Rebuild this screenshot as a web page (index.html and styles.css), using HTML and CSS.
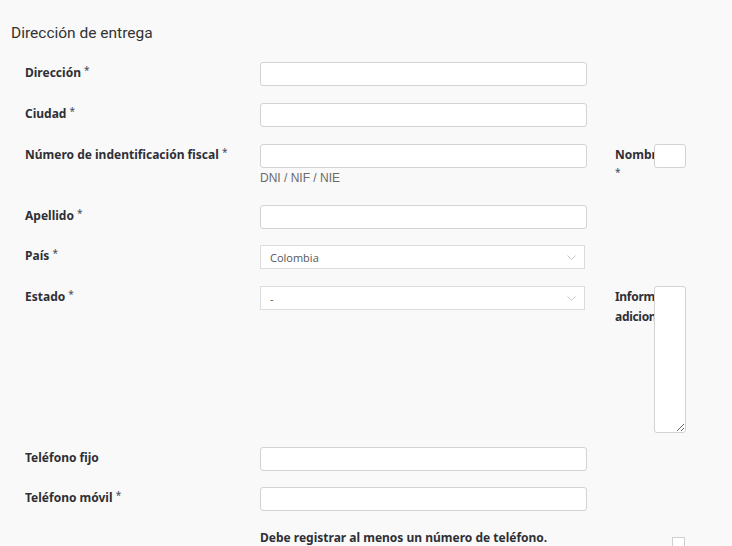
FILE: index.html
```html
<!DOCTYPE html>
<html lang="es">
<head>
<meta charset="utf-8">
<link rel="stylesheet" href="styles.css">
</head>
<body>
<div class="page">
  <h2 class="title">Dirección de entrega</h2>
  <form class="form">
    <label class="lbl c1">Dirección <span class="req">*</span></label>
    <div class="c2"><input class="inp" type="text"></div>

    <label class="lbl c1">Ciudad <span class="req">*</span></label>
    <div class="c2"><input class="inp" type="text"></div>

    <label class="lbl c1">Número de indentificación fiscal <span class="req">*</span></label>
    <div class="c2">
      <input class="inp" type="text">
      <div class="help">DNI / NIF / NIE</div>
    </div>
    <label class="lbl c4">Nombre <span class="req">*</span></label>
    <div class="c5"><input class="inp small" type="text"></div>

    <label class="lbl c1">Apellido <span class="req">*</span></label>
    <div class="c2"><input class="inp" type="text"></div>

    <label class="lbl c1">País <span class="req">*</span></label>
    <div class="c2">
      <div class="sel"><span>Colombia</span><svg class="chev" width="9" height="5" viewBox="0 0 9 5"><path d="M0.5 0.5 L4.5 4.5 L8.5 0.5" fill="none" stroke="#c8c8c8" stroke-width="1"/></svg></div>
    </div>

    <label class="lbl c1">Estado <span class="req">*</span></label>
    <div class="c2">
      <div class="sel"><span>-</span><svg class="chev" width="9" height="5" viewBox="0 0 9 5"><path d="M0.5 0.5 L4.5 4.5 L8.5 0.5" fill="none" stroke="#c8c8c8" stroke-width="1"/></svg></div>
    </div>
    <label class="lbl c4 tight">Información adicional</label>
    <div class="c5"><textarea class="ta"></textarea></div>

    <label class="lbl c1">Teléfono fijo</label>
    <div class="c2"><input class="inp" type="text"></div>

    <label class="lbl c1">Teléfono móvil <span class="req">*</span></label>
    <div class="c2"><input class="inp" type="text"></div>

    <div class="c2 msg">Debe registrar al menos un número de teléfono.</div>
    <div class="c5 chkwrap"><span class="chk"></span></div>
  </form>
</div>
</body>
</html>
```

FILE: styles.css
```css
html, body {
  margin: 0;
  padding: 0;
  background: #f9f9f9;
}
.page {
  width: 732px;
  height: 546px;
  overflow: hidden;
}
.title {
  margin: 0;
  padding: 23px 0 0 11px;
  font-family: Roboto, "Liberation Sans", sans-serif;
  font-weight: 400;
  font-size: 15.5px;
  line-height: 20px;
  color: #333;
}
.form {
  display: grid;
  grid-template-columns: 235px 327px 28px 39px 32px;
  grid-template-rows: 24px 24px 44px 23px 24px 144px 23px 24px auto;
  row-gap: 17px;
  padding: 19px 0 0 25px;
  margin: 0;
}
.c1 { grid-column: 1; }
.c2 { grid-column: 2; }
.c4 { grid-column: 4; }
.c5 { grid-column: 5; }
.lbl {
  font-family: "Noto Sans", Lato, sans-serif;
  font-weight: 700;
  font-size: 12px;
  line-height: 20px;
  padding-top: 1px;
  color: #2f2f36;
  min-width: 0;
}
.tight {
  letter-spacing: -0.3px;
}
.req {
  font-weight: 400;
  font-size: 10px;
  vertical-align: top;
  line-height: 14px;
  color: #3d4b5c;
}
.inp {
  display: block;
  box-sizing: border-box;
  width: 100%;
  height: 24px;
  margin: 0;
  border: 1px solid #d3d3d3;
  border-radius: 3px;
  background: #fff;
  padding: 0 6px;
}
.help {
  font-family: "Liberation Sans", Arial, sans-serif;
  font-size: 12px;
  line-height: 20px;
  color: #6b6b6b;
}
.sel {
  box-sizing: border-box;
  width: 325px;
  height: 24px;
  border: 1px solid #dcdcdc;
  background: #fff;
  display: flex;
  align-items: center;
  justify-content: space-between;
  padding: 0 8px 0 9px;
  font-family: "Open Sans", "Noto Sans", sans-serif;
  font-size: 11px;
  color: #555;
}
.chev { display: block; }
.ta {
  display: block;
  box-sizing: border-box;
  width: 32px;
  height: 147px;
  margin: 0;
  border: 1px solid #d3d3d3;
  border-radius: 3px;
  background: #fff;
  padding: 0;
}
.msg {
  font-family: "Noto Sans", Lato, sans-serif;
  font-weight: 700;
  font-size: 12px;
  line-height: 20px;
  color: #2f2f36;
}
.chkwrap {
  display: flex;
  justify-content: flex-end;
  padding: 9px 1px 0 0;
}
.chk {
  display: block;
  width: 11px;
  height: 11px;
  border: 1px solid #cfcfcf;
  background: #fff;
}
```
